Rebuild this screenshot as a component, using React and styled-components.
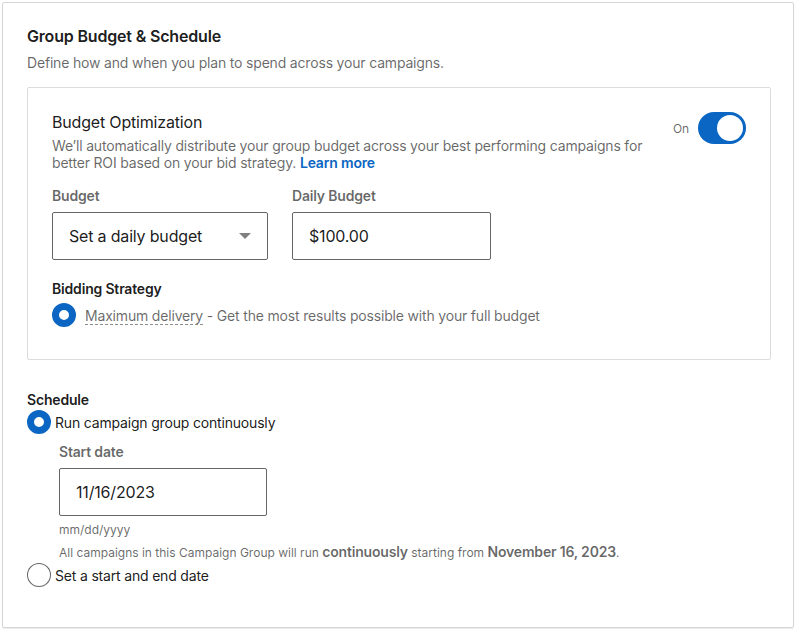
import React from 'react'
import styled, { createGlobalStyle } from 'styled-components'

const Global = createGlobalStyle`
  body {
    margin: 0;
    background: #fff;
    font-family: Inter, "Liberation Sans", Arial, sans-serif;
    letter-spacing: -0.18px;
    color: rgba(0,0,0,0.9);
  }
`

function Radio({ checked }) {
  return <RadioDot checked={checked} />
}

export default function App() {
  return (
    <>
      <Global />
      <Card>
        <Title>Group Budget &amp; Schedule</Title>
        <Subtitle>Define how and when you plan to spend across your campaigns.</Subtitle>

        <InnerCard>
          <OptHeader>
            <div>
              <OptTitle>Budget Optimization</OptTitle>
              <OptText>
                We’ll automatically distribute your group budget across your best performing campaigns for
                better ROI based on your bid strategy. <LearnMore href="#">Learn more</LearnMore>
              </OptText>
            </div>
            <ToggleWrap>
              <ToggleLabel>On</ToggleLabel>
              <Toggle on>
                <Knob />
              </Toggle>
            </ToggleWrap>
          </OptHeader>

          <FieldRow>
            <Field>
              <Label>Budget</Label>
              <SelectBox width={216}>
                Set a daily budget
                <Caret />
              </SelectBox>
            </Field>
            <Field>
              <Label>Daily Budget</Label>
              <InputBox width={199}>$100.00</InputBox>
            </Field>
          </FieldRow>

          <SectionLabel>Bidding Strategy</SectionLabel>
          <RadioRow gap={9} top={4}>
            <Radio checked />
            <MutedText>
              <Dashed>Maximum delivery</Dashed> - Get the most results possible with your full budget
            </MutedText>
          </RadioRow>
        </InnerCard>

        <Schedule>
          <SectionLabel>Schedule</SectionLabel>
          <RadioRow gap={4} top={0}>
            <Radio checked />
            <OptionText>Run campaign group continuously</OptionText>
          </RadioRow>
          <Indent>
            <Label>Start date</Label>
            <InputBox width={208}>11/16/2023</InputBox>
            <Hint top={6}>mm/dd/yyyy</Hint>
            <Hint top={6}>
              All campaigns in this Campaign Group will run <Strong>continuously</Strong> starting from{' '}
              <Strong>November 16, 2023</Strong>.
            </Hint>
          </Indent>
          <RadioRow gap={4} top={2}>
            <Radio />
            <OptionText>Set a start and end date</OptionText>
          </RadioRow>
        </Schedule>
      </Card>
    </>
  )
}

const Card = styled.div`
  margin: 2px;
  box-sizing: border-box;
  width: 792px;
  height: 626px;
  border: 1px solid #d6d6d6;
  border-radius: 2px;
  padding: 22px 22px 0 24px;
  box-shadow: 0 1px 1px rgba(0,0,0,0.08);
`

const Title = styled.h2`
  margin: 0;
  font-size: 16px;
  font-weight: 600;
  line-height: 22px;
  color: rgba(0,0,0,0.9);
`

const Subtitle = styled.p`
  margin: 6px 0 0;
  font-size: 14px;
  line-height: 20px;
  color: rgba(0,0,0,0.6);
`

const InnerCard = styled.div`
  margin-top: 14px;
  box-sizing: border-box;
  height: 273px;
  border: 1px solid #dcdcdc;
  border-radius: 2px;
  padding: 24px 24px 0 24px;
`

const OptHeader = styled.div`
  display: flex;
  justify-content: space-between;
  align-items: flex-start;
`

const OptTitle = styled.div`
  font-size: 16px;
  line-height: 22px;
  margin-top: -1px;
`

const OptText = styled.p`
  margin: 4px 0 0;
  width: 610px;
  font-size: 14px;
  line-height: 17px;
  color: rgba(0,0,0,0.6);
`

const LearnMore = styled.a`
  color: #0a66c2;
  font-weight: 600;
  text-decoration: none;
`

const ToggleWrap = styled.div`
  display: flex;
  align-items: center;
  gap: 9px;
`

const ToggleLabel = styled.span`
  font-size: 12px;
  color: rgba(0,0,0,0.6);
`

const Toggle = styled.div`
  width: 48px;
  height: 32px;
  border-radius: 16px;
  background: ${p => (p.on ? '#0a66c2' : '#888')};
  display: flex;
  align-items: center;
  justify-content: ${p => (p.on ? 'flex-end' : 'flex-start')};
  padding: 0 3px;
  box-sizing: border-box;
`

const Knob = styled.div`
  width: 26px;
  height: 26px;
  border-radius: 50%;
  background: #fff;
`

const FieldRow = styled.div`
  display: flex;
  gap: 24px;
  margin-top: 15px;
`

const Field = styled.div`
  display: flex;
  flex-direction: column;
`

const Label = styled.div`
  font-size: 14px;
  font-weight: 600;
  line-height: 20px;
  color: rgba(0,0,0,0.6);
  margin-bottom: 6px;
`

const InputBox = styled.div`
  box-sizing: border-box;
  width: ${p => p.width}px;
  height: 48px;
  border: 1px solid rgba(0,0,0,0.6);
  border-radius: 2px;
  padding: 0 16px;
  display: flex;
  align-items: center;
  font-size: 16px;
  color: rgba(0,0,0,0.9);
`

const SelectBox = styled(InputBox)`
  justify-content: space-between;
  padding-right: 16px;
`

const Caret = styled.span`
  width: 0;
  height: 0;
  border-left: 6px solid transparent;
  border-right: 6px solid transparent;
  border-top: 6px solid #808080;
`

const SectionLabel = styled.div`
  font-size: 14px;
  font-weight: 600;
  line-height: 20px;
  color: rgba(0,0,0,0.9);
  margin-top: 19px;
`

const RadioRow = styled.div`
  display: flex;
  align-items: center;
  gap: ${p => p.gap}px;
  margin-top: ${p => p.top}px;
`

const RadioDot = styled.span`
  box-sizing: border-box;
  flex: none;
  width: 24px;
  height: 24px;
  border-radius: 50%;
  border: ${p => (p.checked ? '7px solid #0a66c2' : '1px solid rgba(0,0,0,0.6)')};
  background: #fff;
`

const MutedText = styled.span`
  font-size: 14px;
  color: rgba(0,0,0,0.6);
`

const Dashed = styled.span`
  border-bottom: 1px dashed rgba(0,0,0,0.45);
`

const Schedule = styled.div`
  margin-top: 30px;
`

const OptionText = styled.span`
  font-size: 14px;
  color: rgba(0,0,0,0.9);
`

const Indent = styled.div`
  padding-left: 32px;
  padding-top: 8px;
`

const Hint = styled.div`
  font-size: 12px;
  line-height: 16px;
  letter-spacing: 0;
  color: rgba(0,0,0,0.6);
  margin-top: ${p => p.top}px;
`

const Strong = styled.b`
  font-size: 14px;
  font-weight: 600;
  letter-spacing: -0.18px;
`
